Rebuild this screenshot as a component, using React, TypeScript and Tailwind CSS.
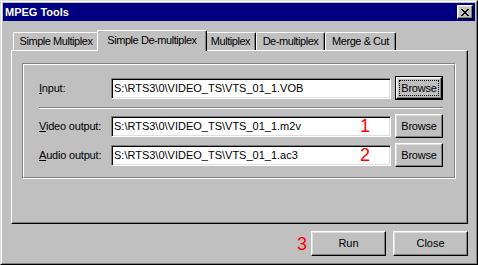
import React from "react";

const raised =
  "border border-t-white border-l-white border-r-black border-b-black shadow-[inset_-1px_-1px_0_#808080,inset_1px_1px_0_#dfdfdf] bg-[#c0c0c0]";
const sunken =
  "border border-t-[#808080] border-l-[#808080] border-r-white border-b-white shadow-[inset_1px_1px_0_#000,inset_-1px_-1px_0_#dfdfdf] bg-white";

const CloseGlyph = () => {
  const rows = [
    "XX....XX",
    ".XX..XX.",
    "..XXXX..",
    "...XX...",
    "..XXXX..",
    ".XX..XX.",
    "XX....XX",
  ];
  return (
    <svg width="8" height="7" viewBox="0 0 8 7" shapeRendering="crispEdges">
      {rows.map((r, y) =>
        r.split("").map((c, x) =>
          c === "X" ? <rect key={`${x}-${y}`} x={x} y={y} width="1" height="1" fill="#000" /> : null
        )
      )}
    </svg>
  );
};

const tabs = [
  { label: "Simple Multiplex", w: "w-[86px]" },
  { label: "Simple De-multiplex", w: "w-[110px]", active: true },
  { label: "Multiplex", w: "w-[51px]" },
  { label: "De-multiplex", w: "w-[69px]" },
  { label: "Merge & Cut", w: "w-[71px]" },
];

const Field = ({ value, mark }: { value: string; mark?: string }) => (
  <div className={`relative w-[280px] h-[21px] ${sunken} flex items-center pl-[2px] whitespace-nowrap`}>
    {value}
    {mark && (
      <span className="absolute inset-y-0 left-[248px] flex items-center text-[18px] leading-none text-[#ff0000]">
        {mark}
      </span>
    )}
  </div>
);

const Row = ({
  k,
  rest,
  value,
  mark,
  isDefault,
  className = "",
}: {
  k: string;
  rest: string;
  value: string;
  mark?: string;
  isDefault?: boolean;
  className?: string;
}) => (
  <div className={`flex items-center h-[24px] ${className}`}>
    <div className="w-[72px] whitespace-nowrap tracking-[-0.2px]">
      <span className="underline underline-offset-1">{k}</span>
      {rest}
    </div>
    <Field value={value} mark={mark} />
    {isDefault ? (
      <div className="ml-[4px] w-[48px] h-[24px] border border-black">
        <div className={`h-full ${raised} flex items-center justify-center p-[2px]`}>
          <div className="w-full h-full border border-dotted border-black flex items-center justify-center tracking-[-0.2px]">
            Browse
          </div>
        </div>
      </div>
    ) : (
      <div className={`ml-[4px] w-[48px] h-[24px] ${raised} flex items-center justify-center tracking-[-0.2px]`}>
        Browse
      </div>
    )}
  </div>
);

export default function App() {
  return (
    <div className="w-[478px] h-[265px] bg-[#c0c0c0] border border-t-[#dfdfdf] border-l-[#dfdfdf] border-r-black border-b-black font-['Liberation_Sans',Arial,sans-serif] text-[11px] text-black">
      <div className="h-full border border-t-white border-l-white border-r-[#808080] border-b-[#808080] p-[1px] flex flex-col">
        {/* Title bar */}
        <div className="h-[18px] bg-[#000080] flex items-center justify-between pl-[2px] pr-[2px]">
          <span className="text-white font-bold text-[11px]">MPEG Tools</span>
          <div className={`w-[16px] h-[14px] ${raised} flex items-center justify-center`}>
            <CloseGlyph />
          </div>
        </div>

        {/* Body */}
        <div className="flex-1 pt-[9px] pl-[8px]">
          <div className="w-[457px]">
            {/* Tabs */}
            <div className="flex items-end h-[20px] pl-[2px] tracking-[-0.45px]">
              {tabs.map((t) =>
                t.active ? (
                  <div
                    key={t.label}
                    className={`${t.w} h-[21px] -mx-[2px] -mb-[1px] relative z-10 bg-[#c0c0c0] border-t border-l border-r border-t-white border-l-white border-r-black shadow-[inset_-1px_0_0_#808080] rounded-t-[2px] flex items-center justify-center pb-[2px] whitespace-nowrap`}
                  >
                    {t.label}
                  </div>
                ) : (
                  <div
                    key={t.label}
                    className={`${t.w} h-[18px] border-t border-l border-r border-t-white border-l-white border-r-black shadow-[inset_-1px_0_0_#808080] rounded-t-[2px] flex items-center justify-center whitespace-nowrap`}
                  >
                    {t.label}
                  </div>
                )
              )}
            </div>

            {/* Tab panel */}
            <div className="h-[174px] border border-t-white border-l-white border-r-black border-b-black shadow-[inset_-1px_-1px_0_#808080] pt-[12px] pl-[10px]">
              <div className="w-[434px] h-[116px] border border-t-[#808080] border-l-[#808080] border-r-white border-b-white">
                <div className="h-full border border-t-white border-l-white border-r-[#808080] border-b-[#808080] pl-[15px] pt-[11px]">
                  <Row k="I" rest="nput:" value="S:\RTS3\0\VIDEO_TS\VTS_01_1.VOB" isDefault />
                  <div className="mt-[7px] w-[404px] h-[2px] border-t border-b border-t-[#808080] border-b-white" />
                  <Row
                    k="V"
                    rest="ideo output:"
                    value="S:\RTS3\0\VIDEO_TS\VTS_01_1.m2v"
                    mark="1"
                    className="mt-[5px]"
                  />
                  <Row
                    k="A"
                    rest="udio output:"
                    value="S:\RTS3\0\VIDEO_TS\VTS_01_1.ac3"
                    mark="2"
                    className="mt-[5px]"
                  />
                </div>
              </div>
            </div>

            {/* Dialog buttons */}
            <div className="mt-[7px] flex items-center justify-end">
              <span className="mr-[4px] text-[18px] leading-none text-[#ff0000]">3</span>
              <div className={`w-[75px] h-[25px] ${raised} flex items-center justify-center`}>Run</div>
              <div className={`ml-[7px] w-[75px] h-[25px] ${raised} flex items-center justify-center`}>Close</div>
            </div>
          </div>
        </div>
      </div>
    </div>
  );
}
